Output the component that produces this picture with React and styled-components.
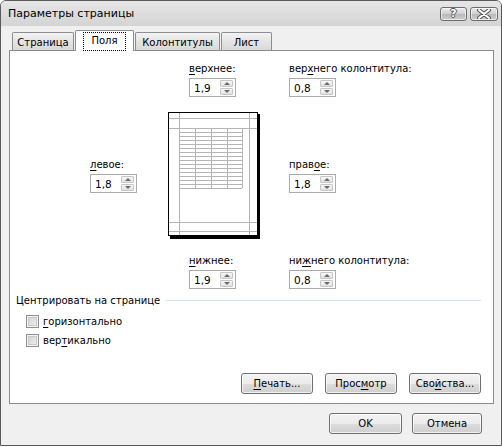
import React from 'react';
import styled, { createGlobalStyle } from 'styled-components';

const GlobalStyle = createGlobalStyle`
  html, body { margin: 0; padding: 0; background: #ffffff; }
  body { font-family: "DejaVu Sans", Tahoma, sans-serif; font-size: 10px; color: #000; }
  * { box-sizing: border-box; }
`;

const Window = styled.div`
  width: 502px;
  height: 446px;
  border: 1px solid #5a5a5a;
  border-radius: 6px 6px 0 0;
  background: #f0f0f0;
  display: flex;
  flex-direction: column;
  overflow: hidden;
`;

const TitleBar = styled.div`
  height: 25px;
  flex: none;
  display: flex;
  align-items: center;
  padding: 0 3px 0 7px;
  background: linear-gradient(#e6e6e6, #d4d4d4);
`;

const Title = styled.div`
  flex: 1;
  font-size: 11px;
`;

const CaptionButtons = styled.div`
  display: flex;
  gap: 3px;
`;

const CaptionButton = styled.div`
  width: ${p => p.$w}px;
  height: 14px;
  border: 1px solid #6c6c6c;
  border-radius: 3px;
  background: linear-gradient(#ececec, #cfcfcf 50%, #b9b9b9 51%, #cdcdcd);
  box-shadow: inset 0 0 0 1px rgba(255, 255, 255, 0.6);
  display: flex;
  align-items: center;
  justify-content: center;
  font-family: "DejaVu Sans", sans-serif;
  font-weight: bold;
  font-size: 11px;
  line-height: 1;
  color: #fff;
  text-shadow: 1px 0 0 #555, -1px 0 0 #555, 0 1px 0 #555, 0 -1px 0 #555;
`;

const Body = styled.div`
  flex: 1;
  display: flex;
  flex-direction: column;
  padding: 4px 7px 0 8px;
`;

const TabRow = styled.div`
  display: flex;
  align-items: flex-end;
  padding-left: 2px;
  margin-bottom: -1px;
  position: relative;
  z-index: 1;
`;

const Tab = styled.div`
  width: ${p => p.$w}px;
  margin-left: 1px;
  height: ${p => (p.$active ? 21 : 18)}px;
  margin-bottom: ${p => (p.$active ? 0 : 1)}px;
  border: 1px solid #8c8e94;
  border-bottom: none;
  border-radius: 2px 2px 0 0;
  background: ${p => (p.$active ? '#ffffff' : 'linear-gradient(#f4f4f4, #e4e4e4 50%, #d9d9d9)')};
  display: flex;
  align-items: center;
  justify-content: center;
  padding-top: ${p => (p.$active ? 0 : 1)}px;
`;

const Focus = styled.span`
  outline: 1px dotted #000;
  outline-offset: 0;
  padding: 2px 7px 3px;
  line-height: 12px;
`;

const Panel = styled.div`
  flex: 1;
  border: 1px solid #898c95;
  background: #ffffff;
  display: flex;
  flex-direction: column;
`;

const MarginGrid = styled.div`
  display: grid;
  grid-template-columns: 78px 121px 1fr;
  row-gap: 15px;
  padding: 11px 0 0 80px;
`;

const Field = styled.div`
  display: flex;
  flex-direction: column;
  gap: 3px;
  align-self: ${p => (p.$center ? 'center' : 'start')};
  margin-left: ${p => p.$indent || 0}px;
  grid-column: ${p => p.$col};
`;

const Label = styled.div`
  line-height: 13px;
  white-space: nowrap;
`;

const Key = styled.span`
  text-decoration: underline;
  text-underline-offset: 2px;
`;

const Spinner = styled.div`
  width: 47px;
  height: 19px;
  border: 1px solid #a9abb1;
  display: flex;
  align-items: center;
  background: #fff;
`;

const SpinValue = styled.div`
  flex: 1;
  padding-left: 4px;
  font-size: 10.5px;
`;

const SpinButtons = styled.div`
  display: flex;
  flex-direction: column;
  gap: 1px;
  margin-right: 2px;
  height: 15px;
`;

const SpinButton = styled.div`
  width: 13px;
  flex: 1;
  border: 1px solid #c6c6c6;
  border-radius: 1px;
  background: linear-gradient(#f7f7f7, #e2e2e2);
  display: flex;
  align-items: center;
  justify-content: center;

  &::after {
    content: '';
    border-left: 3px solid transparent;
    border-right: 3px solid transparent;
    ${p => (p.$down ? 'border-top: 3px solid #6a6a6a;' : 'border-bottom: 3px solid #6a6a6a;')}
  }
`;

const PageCell = styled.div`
  grid-column: 2;
  display: flex;
`;

const Group = styled.div`
  margin-top: 5px;
  padding: 0 12px 0 6px;
`;

const GroupHead = styled.div`
  display: flex;
  align-items: center;
  gap: 6px;
  line-height: 13px;

  &::after {
    content: '';
    flex: 1;
    height: 1px;
    background: #d5dfe5;
  }
`;

const Checks = styled.div`
  display: flex;
  flex-direction: column;
  gap: 6px;
  padding: 8px 0 0 10px;
`;

const CheckRow = styled.label`
  display: flex;
  align-items: center;
  gap: 4px;
  line-height: 13px;
`;

const Box = styled.span`
  width: 13px;
  height: 13px;
  border: 1px solid #8f8f8f;
  background: #f4f4f4;
  box-shadow: inset 0 0 0 1px #f4f4f4, inset 0 0 0 2px #c9c9c9;
  background-image: linear-gradient(135deg, #cfcfcf, #f2f2f2);
`;

const ButtonRow = styled.div`
  margin-top: auto;
  display: flex;
  justify-content: flex-end;
  gap: ${p => p.$gap}px;
  padding: ${p => p.$pad};
`;

const Button = styled.div`
  width: ${p => p.$w}px;
  height: 21px;
  border: 1px solid #707070;
  border-radius: 3px;
  background: linear-gradient(#f3f3f3, #ebebeb 50%, #dddddd 51%, #cfcfcf);
  box-shadow: inset 0 0 0 1px rgba(255, 255, 255, 0.7);
  display: flex;
  align-items: center;
  justify-content: center;
`;

const Footer = styled.div`
  flex: none;
  display: flex;
  justify-content: flex-end;
  gap: 10px;
  padding: 9px 12px 11px 0;
`;

const PagePreview = () => {
  const rows = [];
  for (let y = 20; y <= 76; y += 4) rows.push(y);
  const cols = [27, 43, 59, 74];
  return (
    <svg width="92" height="127" viewBox="0 0 92 127">
      <rect x="2" y="2" width="90" height="125" fill="#000" />
      <rect x="0.5" y="0.5" width="89" height="123" fill="#fff" stroke="#000" />
      <g stroke="#b4b4b4" strokeWidth="1">
        <line x1="11.5" y1="1" x2="11.5" y2="123" />
        <line x1="81.5" y1="1" x2="81.5" y2="123" />
        <line x1="1" y1="6.5" x2="89" y2="6.5" />
        <line x1="1" y1="16.5" x2="89" y2="16.5" />
        <line x1="1" y1="110.5" x2="89" y2="110.5" />
        <line x1="1" y1="119.5" x2="89" y2="119.5" />
        {rows.map(y => (
          <line key={y} x1="11" y1={y + 0.5} x2="74" y2={y + 0.5} />
        ))}
        {cols.map(x => (
          <line key={x} x1={x + 0.5} y1="16" x2={x + 0.5} y2="76" />
        ))}
      </g>
    </svg>
  );
};

const Spin = ({ value }) => (
  <Spinner>
    <SpinValue>{value}</SpinValue>
    <SpinButtons>
      <SpinButton />
      <SpinButton $down />
    </SpinButtons>
  </Spinner>
);

const CloseIcon = () => (
  <svg width="14" height="10" viewBox="0 0 14 10">
    <path d="M2 1 L12 9 M12 1 L2 9" stroke="#555" strokeWidth="4" strokeLinecap="round" />
    <path d="M2 1 L12 9 M12 1 L2 9" stroke="#fff" strokeWidth="2" strokeLinecap="round" />
  </svg>
);

export default function App() {
  return (
    <>
      <GlobalStyle />
      <Window>
        <TitleBar>
          <Title>Параметры страницы</Title>
          <CaptionButtons>
            <CaptionButton $w={27}>?</CaptionButton>
            <CaptionButton $w={28}><CloseIcon /></CaptionButton>
          </CaptionButtons>
        </TitleBar>
        <Body>
          <TabRow>
            <Tab $w={62}>Страница</Tab>
            <Tab $w={59} $active><Focus>Поля</Focus></Tab>
            <Tab $w={85}>Колонтитулы</Tab>
            <Tab $w={51}>Лист</Tab>
          </TabRow>
          <Panel>
            <MarginGrid>
              <Field $col={2} $indent={21}>
                <Label><Key>в</Key>ерхнее:</Label>
                <Spin value="1,9" />
              </Field>
              <Field $col={3}>
                <Label>вер<Key>х</Key>него колонтитула:</Label>
                <Spin value="0,8" />
              </Field>
              <Field $col={1} $center>
                <Label><Key>л</Key>евое:</Label>
                <Spin value="1,8" />
              </Field>
              <PageCell>
                <PagePreview />
              </PageCell>
              <Field $col={3} $center>
                <Label>прав<Key>о</Key>е:</Label>
                <Spin value="1,8" />
              </Field>
              <Field $col={2} $indent={21}>
                <Label><Key>н</Key>ижнее:</Label>
                <Spin value="1,9" />
              </Field>
              <Field $col={3}>
                <Label>ни<Key>ж</Key>него колонтитула:</Label>
                <Spin value="0,8" />
              </Field>
            </MarginGrid>
            <Group>
              <GroupHead>Центрировать на странице</GroupHead>
              <Checks>
                <CheckRow><Box /><span><Key>г</Key>оризонтально</span></CheckRow>
                <CheckRow><Box /><span>вер<Key>т</Key>икально</span></CheckRow>
              </Checks>
            </Group>
            <ButtonRow $gap={12} $pad="0 12px 9px 0">
              <Button $w={72}><span><Key>П</Key>ечать...</span></Button>
              <Button $w={72}><span>Прос<Key>м</Key>отр</span></Button>
              <Button $w={72}><span>Сво<Key>й</Key>ства...</span></Button>
            </ButtonRow>
          </Panel>
          <Footer>
            <Button $w={73}>OK</Button>
            <Button $w={70}>Отмена</Button>
          </Footer>
        </Body>
      </Window>
    </>
  );
}
